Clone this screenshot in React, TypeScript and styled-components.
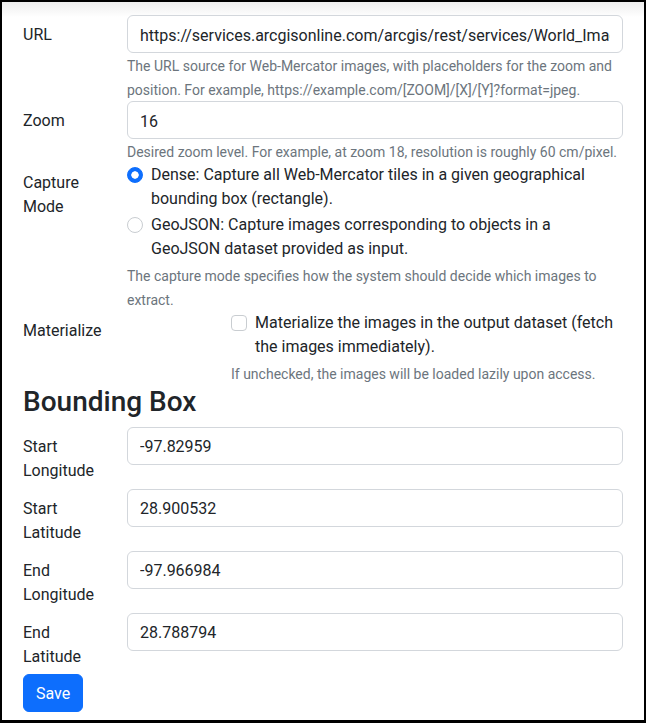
import * as React from "react";
import styled, { createGlobalStyle } from "styled-components";

const GlobalStyle = createGlobalStyle`
  body {
    margin: 0;
    font-family: Roboto, "Liberation Sans", sans-serif;
    font-size: 16px;
    line-height: 1.5;
    color: #212529;
    background: #ffffff;
  }
`;

const ScFrame = styled.div`
  box-sizing: border-box;
  width: 646px;
  height: 723px;
  border: 2px solid #000000;
  border-bottom-width: 3px;
  padding: 13px 21px 0 21px;
  background: linear-gradient(to bottom, #eeeeee 0, #f8f8f8 9px, #ffffff 15px);
  overflow: hidden;
`;

const ScRow = styled.div`
  display: grid;
  grid-template-columns: 80px 1fr;
  column-gap: 24px;
`;

const ScLabel = styled.label`
  padding: 8px 0 6px 0;
  line-height: 24px;
`;

const ScInput = styled.input`
  box-sizing: border-box;
  display: block;
  width: 100%;
  height: 38px;
  padding: 7px 12px 5px 12px;
  font-family: inherit;
  font-size: 16px;
  line-height: 24px;
  color: #212529;
  background: #ffffff;
  border: 1px solid #d3d7dc;
  border-radius: 6px;
  outline: none;
`;

const ScHelp = styled.div<{ $indent?: boolean }>`
  font-size: 14px;
  line-height: 24px;
  padding-top: 1px;
  margin-bottom: -1px;
  color: #6c757d;
  margin-left: ${(p) => (p.$indent ? "104px" : "0")};
`;

const ScCheck = styled.div<{ $indent?: boolean }>`
  display: flex;
  gap: 8px;
  margin-bottom: 2px;
  margin-left: ${(p) => (p.$indent ? "104px" : "0")};
  line-height: 24px;
`;

const ScRadio = styled.input`
  appearance: none;
  flex: none;
  width: 16px;
  height: 16px;
  margin: 4px 0 0 0;
  border: 1px solid #c9cdd1;
  border-radius: 50%;
  background: #ffffff;

  &:checked {
    border-color: #0d6efd;
    background: radial-gradient(circle, #ffffff 0, #ffffff 3.4px, #0d6efd 4px);
  }
`;

const ScCheckbox = styled.input`
  appearance: none;
  flex: none;
  width: 16px;
  height: 16px;
  margin: 4px 0 0 0;
  border: 1px solid #c9cdd1;
  border-radius: 4px;
  background: #ffffff;
`;

const ScHeading = styled.h3`
  margin: 0 0 8px 0;
  font-size: 28px;
  font-weight: 500;
  line-height: 1.2;
  color: #212529;
`;

const ScButton = styled.button`
  display: block;
  margin-top: -1px;
  padding: 7px 12px 5px 12px;
  font-family: inherit;
  font-size: 16px;
  line-height: 24px;
  color: #ffffff;
  background: #0d6efd;
  border: 1px solid #0d6efd;
  border-radius: 6px;
`;

const bounds = [
  { label: "Start Longitude", value: "-97.82959" },
  { label: "Start Latitude", value: "28.900532" },
  { label: "End Longitude", value: "-97.966984" },
  { label: "End Latitude", value: "28.788794" },
];

export default function App(): JSX.Element {
  return (
    <>
      <GlobalStyle />
      <ScFrame>
        <form onSubmit={(e) => e.preventDefault()}>
          <ScRow>
            <ScLabel>URL</ScLabel>
            <div>
              <ScInput
                defaultValue="https://services.arcgisonline.com/arcgis/rest/services/World_Imagery/MapServer/tile/[ZOOM]/[Y]/[X]"
              />
              <ScHelp>
                The URL source for Web-Mercator images, with placeholders for the zoom and
                position. For example, https://example.com/[ZOOM]/[X]/[Y]?format=jpeg.
              </ScHelp>
            </div>
          </ScRow>
          <ScRow>
            <ScLabel>Zoom</ScLabel>
            <div>
              <ScInput defaultValue="16" />
              <ScHelp>
                Desired zoom level. For example, at zoom 18, resolution is roughly 60 cm/pixel.
              </ScHelp>
            </div>
          </ScRow>
          <ScRow>
            <ScLabel>Capture Mode</ScLabel>
            <div>
              <ScCheck>
                <ScRadio type="radio" name="mode" defaultChecked />
                <span>
                  Dense: Capture all Web-Mercator tiles in a given geographical bounding box
                  (rectangle).
                </span>
              </ScCheck>
              <ScCheck>
                <ScRadio type="radio" name="mode" />
                <span>
                  GeoJSON: Capture images corresponding to objects in a GeoJSON dataset provided
                  as input.
                </span>
              </ScCheck>
              <ScHelp>
                The capture mode specifies how the system should decide which images to extract.
              </ScHelp>
            </div>
          </ScRow>
          <ScRow>
            <ScLabel>Materialize</ScLabel>
            <div>
              <ScCheck $indent>
                <ScCheckbox type="checkbox" />
                <span>
                  Materialize the images in the output dataset (fetch the images immediately).
                </span>
              </ScCheck>
              <ScHelp $indent>If unchecked, the images will be loaded lazily upon access.</ScHelp>
            </div>
          </ScRow>
          <ScHeading>Bounding Box</ScHeading>
          {bounds.map((b) => (
            <ScRow key={b.label}>
              <ScLabel>{b.label}</ScLabel>
              <div>
                <ScInput defaultValue={b.value} />
              </div>
            </ScRow>
          ))}
          <ScButton type="submit">Save</ScButton>
        </form>
      </ScFrame>
    </>
  );
}
